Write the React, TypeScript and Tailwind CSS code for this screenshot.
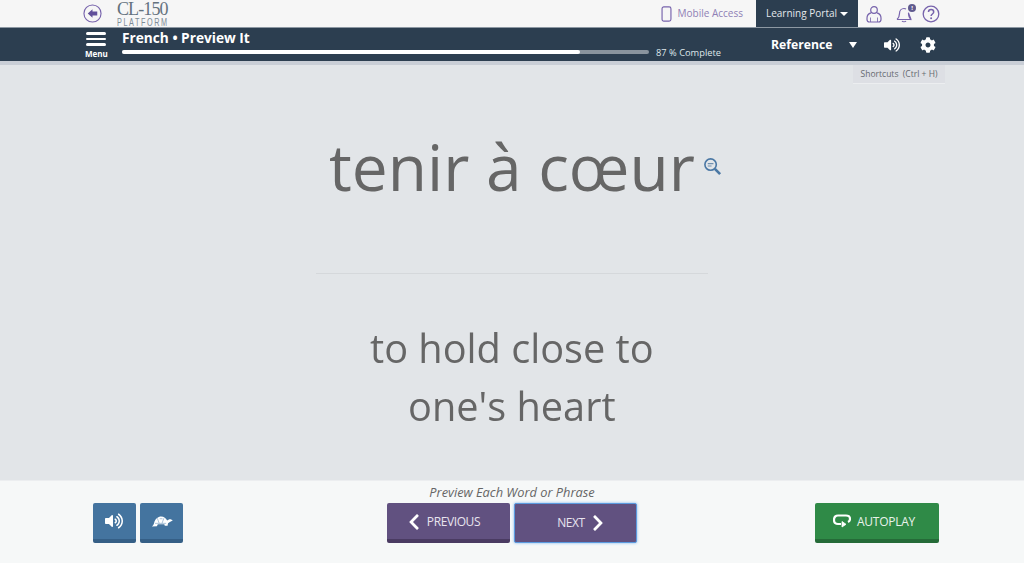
import React from "react";
import { FaChevronLeft, FaChevronRight, FaCog, FaVolumeUp } from "react-icons/fa";

export default function App() {
  return (
    <div className="relative flex h-[563px] w-[1024px] flex-col overflow-hidden bg-[#e1e4e7] font-['Open_Sans',sans-serif]">
      <header className="flex h-[28px] items-center border-b border-[#8d98a3] bg-[#f6f6f6] pl-[83px] pr-[84px]">
        <svg viewBox="0 0 20 20" className="h-[19px] w-[19px] text-[#7763ac]" fill="none">
          <circle cx="10" cy="10" r="9" stroke="currentColor" strokeWidth="1.2" />
          <path d="M10 5.500 5 10l5 4.500V12h5V8h-5Z" fill="#62509a" />
        </svg>
        <div className="ml-[15px] flex w-[52px] flex-col items-start">
          <span className="whitespace-nowrap font-['Liberation_Serif',serif] text-[18px] leading-[17px] tracking-[-0.9px] text-[#64727e]">CL-150</span>
          <span className="w-[80px] origin-left scale-x-[0.66] whitespace-nowrap font-['Liberation_Sans',sans-serif] text-[11px] leading-[9px] tracking-[2.4px] text-[#7d8b96]">PLATFORM</span>
        </div>
        <div className="ml-auto flex items-center">
          <svg viewBox="0 0 12 18" className="h-[16px] w-[11px] text-[#7763ac]" fill="none">
            <rect x="1" y="1" width="10" height="16" rx="2" stroke="currentColor" strokeWidth="1.300" />
          </svg>
          <span className="ml-[6px] text-[10px] text-[#8f80b5]">Mobile Access</span>
          <div className="ml-[13px] flex h-[27px] w-[102px] items-center justify-center gap-[3px] bg-[#2c3e50] text-[10px] text-[#e4e8ec]">
            Learning Portal
            <span className="h-0 w-0 border-x-[4px] border-t-[4px] border-x-transparent border-t-white" />
          </div>
          <svg viewBox="0 0 18 18" className="ml-[7px] h-[18px] w-[18px] text-[#7763ac]" fill="none" stroke="currentColor" strokeWidth="1.200">
            <circle cx="9" cy="5" r="3.300" />
            <path d="M6 7.800C3.500 8.500 2 10 2 13v1.500c0 1.500 1 2.500 2.500 2.500h9c1.500 0 2.500-1 2.500-2.500V13c0-3-1.500-4.500-4-5.200" />
            <path d="M5.500 12.500v4.500M12.500 12.500v4.500" strokeWidth=".8" />
          </svg>
          <div className="relative ml-[12px] h-[18px] w-[18px]">
            <svg viewBox="0 0 18 18" className="h-[18px] w-[18px] text-[#7763ac]" fill="none" stroke="currentColor" strokeWidth="1.200">
              <path d="M2 14.500c1.500-1.500 2.500-3 2.500-6 0-3 2-5 4.500-5 1 0 1.500.2 2 .5M13.500 8c0 3 .8 5 2.500 6.500Z" strokeLinejoin="round" />
              <path d="M2 14.500h14M7 16c.8 1 3.200 1 4 0" />
            </svg>
            <span className="absolute right-[-3px] top-[-1px] flex h-[8px] w-[8px] items-center justify-center rounded-full bg-[#5f5a8e] text-[6px] font-bold leading-none text-white">!</span>
          </div>
          <svg viewBox="0 0 18 18" className="ml-[9px] h-[18px] w-[18px] text-[#7763ac]" fill="none">
            <circle cx="9" cy="9" r="7.800" stroke="currentColor" strokeWidth="1.300" />
            <path d="M6.500 7c0-1.500 1.100-2.500 2.600-2.500S11.700 5.500 11.700 7c0 2-2.600 2-2.600 4" stroke="currentColor" strokeWidth="1.500" />
            <circle cx="9.100" cy="13.200" r="1" fill="currentColor" />
          </svg>
        </div>
      </header>

      <div className="flex h-[33px] items-center bg-[#2c3e50] pl-[86px] pr-[88px] text-white">
        <div className="flex w-[36px] shrink-0 flex-col">
          <div className="mt-[1px] flex w-[20px] flex-col gap-[3px]">
            <span className="h-[2.500px] rounded-sm bg-white" />
            <span className="h-[2.500px] rounded-sm bg-white" />
            <span className="h-[2.500px] rounded-sm bg-white" />
          </div>
          <span className="ml-[-1px] mt-[3px] text-[8px] font-bold leading-[9px]">Menu</span>
        </div>
        <div className="mb-[6px] flex w-[527px] shrink-0 flex-col">
          <span className="text-[13.700px] font-bold leading-[18px]">French • Preview It</span>
          <div className="mt-[3px] h-[4px] rounded-full bg-[#8a949e]">
            <div className="h-full rounded-full bg-white" style={{ width: "87%" }} />
          </div>
        </div>
        <span className="ml-[7px] mt-[16px] shrink-0 whitespace-nowrap text-[9.300px] text-[#dfe7ea]">87 % Complete</span>
        <span className="ml-[50px] mt-[1px] shrink-0 text-[12.200px] font-bold">Reference</span>
        <span className="ml-[17px] h-0 w-0 shrink-0 border-x-[4.500px] border-t-[6px] border-x-transparent border-t-white" />
        <FaVolumeUp className="ml-[27px] h-[16px] w-[16px] shrink-0 text-white" />
        <FaCog className="ml-[20px] h-[16px] w-[16px] shrink-0 text-white" />
      </div>
      <div className="h-[4px] bg-[#c9ced6]" />

      <main className="relative flex flex-1 flex-col items-center bg-[#e2e5e8]">
        <div className="absolute right-[79px] top-0 flex h-[18px] w-[92px] items-center justify-center bg-[#dddfe4] text-[8.500px] text-[#666a70] shadow-[0_1px_0_#eceef0]">
          Shortcuts&nbsp;&nbsp;(Ctrl + H)
        </div>
        <div className="relative mt-[59px] h-[86px]">
          <span className="inline-block text-[64px] leading-[86px] text-[#666] will-change-transform">tenir à cœur</span>
          <svg viewBox="0 0 20 20" className="absolute left-[374px] top-[33px] h-[19px] w-[19px]" fill="none">
            <circle cx="8" cy="8" r="6" stroke="#4a77a4" strokeWidth="1.700" />
            <path d="M5 7h6M5 9.500h4" stroke="#6f8fae" strokeWidth="1.200" />
            <path d="M12.500 12.500 18 18" stroke="#4a77a4" strokeWidth="2.800" />
          </svg>
        </div>
        <div className="mt-[63px] h-px w-[392px] bg-[#d5d8db]" />
        <div className="mt-[45px] text-center text-[39.700px] leading-[58px] text-[#666] will-change-transform">
          to hold close to
          <br />
          one's heart
        </div>
      </main>

      <footer className="flex h-[83px] items-start border-t border-[#eceef0] bg-[#f6f8f8] pl-[93px] pr-[85px]">
        <div className="mt-[22px] flex gap-[4px]">
          <button className="flex h-[40px] w-[43px] items-center justify-center rounded-[2px] border-b-[4px] border-[#355f86] bg-[#44749f] text-white">
            <FaVolumeUp className="mr-[1px] h-[18px] w-[18px]" />
          </button>
          <button className="flex h-[40px] w-[43px] items-center justify-center rounded-[2px] border-b-[4px] border-[#355f86] bg-[#44749f] text-white">
            <svg viewBox="0 0 24 14" className="h-[13px] w-[24px]">
              <path fill="currentColor" d="M1 12.500c1-1 2-2 2.500-4C4.500 4 8 1.500 11 1.500c3 0 5.500 2 6.500 4.500l1.500-1c1.500-1 4 0 4.500 1l-3 1.500-2 1.500-.5 2.500h-3l-.5-1.500H7.500l-1 2Z" />
              <path stroke="#7fa3c4" strokeWidth=".7" fill="none" d="M4.500 9h12M7 3.500 9 9M14 3.500 12 9M9.500 4h3" />
            </svg>
          </button>
        </div>
        <div className="ml-[204px] flex flex-col items-center">
          <p className="mt-[1px] text-[12.800px] italic leading-[21px] text-[#666]">Preview Each Word or Phrase</p>
          <div className="flex gap-[4px]">
            <button className="flex h-[40px] w-[123px] items-center justify-center gap-[5px] rounded-[2px] border-b-[4px] border-[#4a3b62] bg-[#615180] pr-[11px] pt-[1px] text-[12px] tracking-[-0.4px] text-[#e8e4ef]">
              <FaChevronLeft className="h-[18px] w-[16px] text-white" />
              PREVIOUS
            </button>
            <button className="flex h-[40px] w-[123px] items-center justify-center gap-[5px] rounded-[2px] border border-[#5b9be0] bg-[#615180] pl-[12px] text-[12px] tracking-[-0.4px] text-[#e8e4ef] shadow-[0_0_3px_#7eb4ee]">
              NEXT
              <FaChevronRight className="h-[18px] w-[16px] text-white" />
            </button>
          </div>
        </div>
        <button className="ml-auto mt-[22px] flex h-[40px] w-[124px] items-center justify-center gap-[6px] rounded-[2px] border-b-[4px] border-[#256b38] bg-[#2f8a47] pr-[6px] pt-[2px] text-[12px] tracking-[-0.25px] text-[#e8f2ea]">
          <svg viewBox="0 0 18 14" className="mb-[2px] h-[14px] w-[18px]" fill="none" stroke="white" strokeWidth="2.200">
            <path d="M8 10H5C2.500 10 1 8.500 1 6s1.500-4.500 4-4.500h8c2.500 0 4 1.500 4 3.500 0 1.500-1 2.500-2 3" />
            <path d="M9 7.500v5.500l4-2.700Z" fill="white" strokeWidth=".8" />
          </svg>
          AUTOPLAY
        </button>
      </footer>
    </div>
  );
}
